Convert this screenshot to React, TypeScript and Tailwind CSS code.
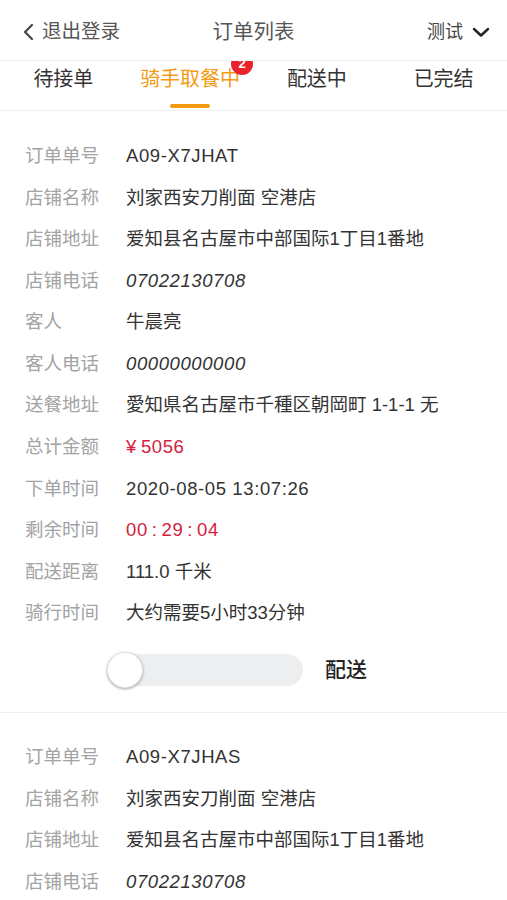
import React from "react";

type Row = { label: string; value: React.ReactNode; kind?: "italic" | "red"; latin?: boolean };

const font = { fontFamily: '"Liberation Sans", "Noto Sans CJK SC", sans-serif' };

function InfoRow({ label, value, kind, latin }: Row) {
  return (
    <div className="flex items-center h-[41.6px] pl-[25px]">
      <div className="w-[101px] shrink-0 text-[18.5px] text-[#a3a3a3]">{label}</div>
      <div
        className={
          "text-[18.5px] whitespace-nowrap " +
          (latin ? "tracking-[0.6px] " : "") +
          (kind === "italic" ? "italic text-[#333333]" : kind === "red" ? "text-[#d4203e]" : "text-[#333333]")
        }
      >
        {value}
      </div>
    </div>
  );
}

const card1: Row[] = [
  { label: "订单单号", value: "A09-X7JHAT", latin: true },
  { label: "店铺名称", value: "刘家西安刀削面 空港店" },
  { label: "店铺地址", value: "爱知县名古屋市中部国际1丁目1番地" },
  { label: "店铺电话", value: "07022130708", kind: "italic", latin: true },
  { label: "客人", value: "牛晨亮" },
  { label: "客人电话", value: "00000000000", kind: "italic", latin: true },
  { label: "送餐地址", value: "愛知県名古屋市千種区朝岡町 1-1-1 无" },
  {
    label: "总计金额",
    value: (
      <span>
        ¥<span className="ml-[4px]">5056</span>
      </span>
    ),
    kind: "red",
    latin: true,
  },
  { label: "下单时间", value: "2020-08-05 13:07:26", latin: true },
  {
    label: "剩余时间",
    value: (
      <span>
        00<span className="mx-[4px]">:</span>29<span className="mx-[4px]">:</span>04
      </span>
    ),
    kind: "red",
    latin: true,
  },
  { label: "配送距离", value: "111.0 千米" },
  { label: "骑行时间", value: "大约需要5小时33分钟" },
];

const card2: Row[] = [
  { label: "订单单号", value: "A09-X7JHAS", latin: true },
  { label: "店铺名称", value: "刘家西安刀削面 空港店" },
  { label: "店铺地址", value: "爱知县名古屋市中部国际1丁目1番地" },
  { label: "店铺电话", value: "07022130708", kind: "italic", latin: true },
];

export default function App() {
  const tabs = ["待接单", "骑手取餐中", "配送中", "已完结"];
  return (
    <div className="w-[507px] h-[900px] overflow-hidden bg-white" style={font}>
      {/* Header */}
      <div className="h-[61px] pt-[4px] grid grid-cols-[1fr_auto_1fr] items-center border-b border-[#f0f0f0]">
        <div className="flex items-center pl-[23px]">
          <svg width="11" height="18" viewBox="0 0 11 18">
            <polyline points="9,2 2,9 9,16" fill="none" stroke="#444" strokeWidth="2.2" strokeLinecap="round" strokeLinejoin="round" />
          </svg>
          <span className="ml-[8px] text-[19.5px] text-[#555555]">退出登录</span>
        </div>
        <div className="text-[20.5px] text-[#555555]">订单列表</div>
        <div className="flex items-center justify-end pr-[17px]">
          <span className="text-[18px] text-[#444444]">测试</span>
          <svg className="ml-[9px]" width="18" height="12" viewBox="0 0 18 12">
            <polyline points="2,3 9,9.5 16,3" fill="none" stroke="#222" strokeWidth="2.4" strokeLinecap="round" strokeLinejoin="round" />
          </svg>
        </div>
      </div>

      {/* Tabs */}
      <div className="h-[50px] grid grid-cols-4 border-b border-[#f0f0f0] overflow-hidden">
        {tabs.map((t, i) => (
          <div key={t} className="relative flex justify-center">
            <span
              className={
                "relative mt-[5px] h-[26px] leading-[26px] text-[20px] " +
                (i === 1 ? "text-[#f29a12]" : "text-[#333333]")
              }
            >
              {t}
              {i === 1 && (
                <span className="absolute right-[-13px] top-[-13px] w-[22px] h-[22px] rounded-full bg-[#e8212b] text-white text-[13px] font-bold leading-[22px] text-center">
                  2
                </span>
              )}
            </span>
            {i === 1 && (
              <div className="absolute bottom-[2px] left-1/2 -translate-x-1/2 w-[40px] h-[4px] rounded-full bg-[#f29a12]" />
            )}
          </div>
        ))}
      </div>

      {/* Card 1 */}
      <div className="pt-[24px]">
        {card1.map((r) => (
          <InfoRow key={r.label} {...r} />
        ))}
        <div className="flex items-center mt-[20px] mb-[26px] pl-[107px]">
          <div className="relative w-[196px] h-[32px] rounded-full bg-[#eceef0]">
            <div className="absolute left-0 top-[-2px] w-[36px] h-[36px] rounded-full bg-white shadow-[0_1px_3px_rgba(0,0,0,0.35)] border border-[#e5e5e5]" />
          </div>
          <span className="ml-[22px] text-[21px] font-medium text-[#222222]">配送</span>
        </div>
      </div>
      <div className="h-px bg-[#f0f0f0]" />

      {/* Card 2 */}
      <div className="pt-[23px]">
        {card2.map((r) => (
          <InfoRow key={r.label} {...r} />
        ))}
      </div>
    </div>
  );
}
